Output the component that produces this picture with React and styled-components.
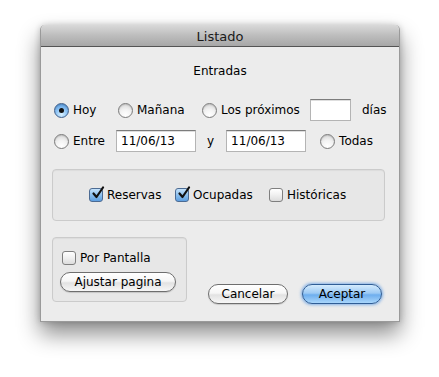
import React from 'react';
import styled, { createGlobalStyle, css } from 'styled-components';

const GlobalStyle = createGlobalStyle`
  html, body {
    margin: 0;
    padding: 0;
    background: #ffffff;
  }
  body {
    font-family: "DejaVu Sans", "Lucida Grande", sans-serif;
    font-size: 12px;
    color: #000;
  }
`;

const Stage = styled.div`
  width: 439px;
  height: 377px;
  padding: 25px 39px 0 40px;
  box-sizing: border-box;
`;

const Window = styled.div`
  width: 360px;
  height: 297px;
  box-sizing: border-box;
  display: flex;
  flex-direction: column;
  background: #ececec;
  border: 1px solid #9a9a9a;
  border-top: none;
  border-radius: 5px 5px 0 0;
  box-shadow: 0 12px 22px rgba(0, 0, 0, 0.45), 0 0 6px rgba(0, 0, 0, 0.2);
`;

const TitleBar = styled.div`
  height: 20px;
  flex: none;
  border-radius: 5px 5px 0 0;
  border-bottom: 1px solid #545454;
  background: linear-gradient(#d9d9d9, #bdbdbd 50%, #a7a7a7);
  display: flex;
  align-items: center;
  justify-content: center;
  font-size: 13px;
  color: #1a1a1a;
  padding-top: 1px;
`;

const Body = styled.div`
  flex: 1;
  display: flex;
  flex-direction: column;
  padding: 16px 14px 0 11px;
`;

const Heading = styled.div`
  text-align: center;
  height: 16px;
  line-height: 16px;
  margin-left: 3px;
`;

const Row = styled.div`
  display: flex;
  align-items: center;
  height: 22px;
  padding-left: 2px;
  margin-top: ${p => p.$top}px;
`;

const Option = styled.label`
  display: flex;
  align-items: center;
  gap: 4px;
  width: ${p => (p.$width ? `${p.$width}px` : 'auto')};
  margin-left: ${p => p.$left || 0}px;
  flex: none;
  white-space: nowrap;
`;

const Radio = styled.span`
  width: 15px;
  height: 15px;
  box-sizing: border-box;
  border-radius: 50%;
  flex: none;
  display: flex;
  align-items: center;
  justify-content: center;
  border: 1px solid #7b7b7b;
  background: radial-gradient(circle at 50% 85%, #ffffff 0%, #f2f2f2 45%, #cfcfcf 100%);
  box-shadow: inset 0 1px 1px rgba(0, 0, 0, 0.12);
  ${p => p.$on && css`
    border-color: #3f5f8a;
    background: radial-gradient(circle at 50% 80%, #d8f0ff 0%, #8fc4f4 45%, #4a8fd6 100%);
    &::after {
      content: '';
      width: 5px;
      height: 5px;
      border-radius: 50%;
      background: #111;
    }
  `}
`;

const Check = styled.span`
  width: 14px;
  height: 14px;
  box-sizing: border-box;
  border-radius: 3px;
  flex: none;
  position: relative;
  border: 1px solid #7f7f7f;
  background: linear-gradient(#ffffff, #f0f0f0 50%, #dcdcdc);
  ${p => p.$on && css`
    border-color: #4c6b93;
    background: linear-gradient(#c4e2fb, #8cc0ee 50%, #5d9ee0);
  `}
`;

const Tick = styled.svg`
  position: absolute;
  left: 1px;
  top: -3px;
`;

const Field = styled.div`
  width: ${p => p.$width}px;
  height: 22px;
  box-sizing: border-box;
  flex: none;
  margin-left: ${p => p.$left || 0}px;
  background: #fff;
  border: 1px solid #b4b4b4;
  border-top-color: #7c7c7c;
  box-shadow: inset 0 1px 0 #dedede;
  display: flex;
  align-items: center;
  padding-left: 4px;
  font-size: 12px;
`;

const Text = styled.span`
  margin-left: ${p => p.$left || 0}px;
  flex: none;
`;

const GroupBox = styled.div`
  box-sizing: border-box;
  border: 1px solid #cbcbcb;
  border-radius: 4px;
  background: #e7e7e7;
  box-shadow: inset 0 1px 1px rgba(0, 0, 0, 0.05);
`;

const FilterBox = styled(GroupBox)`
  margin-top: 17px;
  width: 333px;
  height: 52px;
  display: flex;
  align-items: center;
  padding-left: 36px;
`;

const BottomRow = styled.div`
  display: flex;
  margin-top: 16px;
`;

const ScreenBox = styled(GroupBox)`
  width: 135px;
  height: 65px;
  display: flex;
  flex-direction: column;
  padding: 13px 0 0 9px;
  gap: 7px;
`;

const Actions = styled.div`
  display: flex;
  gap: 14px;
  margin-left: 21px;
  margin-top: 47px;
`;

const Button = styled.button`
  font-family: inherit;
  font-size: 12px;
  color: #000;
  width: ${p => p.$width}px;
  height: 20px;
  padding: 0;
  border-radius: 10px;
  border: 1px solid #6e6e6e;
  background: linear-gradient(#ffffff, #f6f6f6 45%, #e2e2e2 55%, #f7f7f7);
  box-shadow: 0 1px 1px rgba(0, 0, 0, 0.15);
  margin-left: ${p => p.$left || 0}px;
  ${p => p.$primary && css`
    border-color: #2f5d95;
    background: linear-gradient(#d4ebfd, #9dcaf4 45%, #6eaeee 55%, #a9d6fb);
    box-shadow: 0 0 3px 1px rgba(74, 144, 226, 0.65);
  `}
`;

function RadioOption({ label, on, width, left }) {
  return (
    <Option $width={width} $left={left}>
      <Radio $on={on} />
      {label}
    </Option>
  );
}

function CheckOption({ label, on, width }) {
  return (
    <Option $width={width}>
      <Check $on={on}>
        {on && (
          <Tick width="14" height="14" viewBox="0 0 14 14">
            <path d="M2.5 7.5 L5.5 11 L12 1.5" fill="none" stroke="#111" strokeWidth="2.2" strokeLinecap="round" strokeLinejoin="round" />
          </Tick>
        )}
      </Check>
      {label}
    </Option>
  );
}

export default function App() {
  return (
    <>
      <GlobalStyle />
      <Stage>
        <Window>
          <TitleBar>Listado</TitleBar>
          <Body>
            <Heading>Entradas</Heading>
            <Row $top={20}>
              <RadioOption label="Hoy" on width={64} />
              <RadioOption label="Mañana" width={84} />
              <RadioOption label="Los próximos" width={108} />
              <Field $width={41} />
              <Text $left={11}>días</Text>
            </Row>
            <Row $top={9}>
              <RadioOption label="Entre" width={62} />
              <Field $width={80}>11/06/13</Field>
              <Text $left={11}>y</Text>
              <Field $width={80} $left={12}>11/06/13</Field>
              <RadioOption label="Todas" left={14} />
            </Row>
            <FilterBox>
              <CheckOption label="Reservas" on width={86} />
              <CheckOption label="Ocupadas" on width={94} />
              <CheckOption label="Históricas" />
            </FilterBox>
            <BottomRow>
              <ScreenBox>
                <CheckOption label="Por Pantalla" />
                <Button $width={116} $left={-2}>Ajustar pagina</Button>
              </ScreenBox>
              <Actions>
                <Button $width={80}>Cancelar</Button>
                <Button $width={80} $primary>Aceptar</Button>
              </Actions>
            </BottomRow>
          </Body>
        </Window>
      </Stage>
    </>
  );
}
